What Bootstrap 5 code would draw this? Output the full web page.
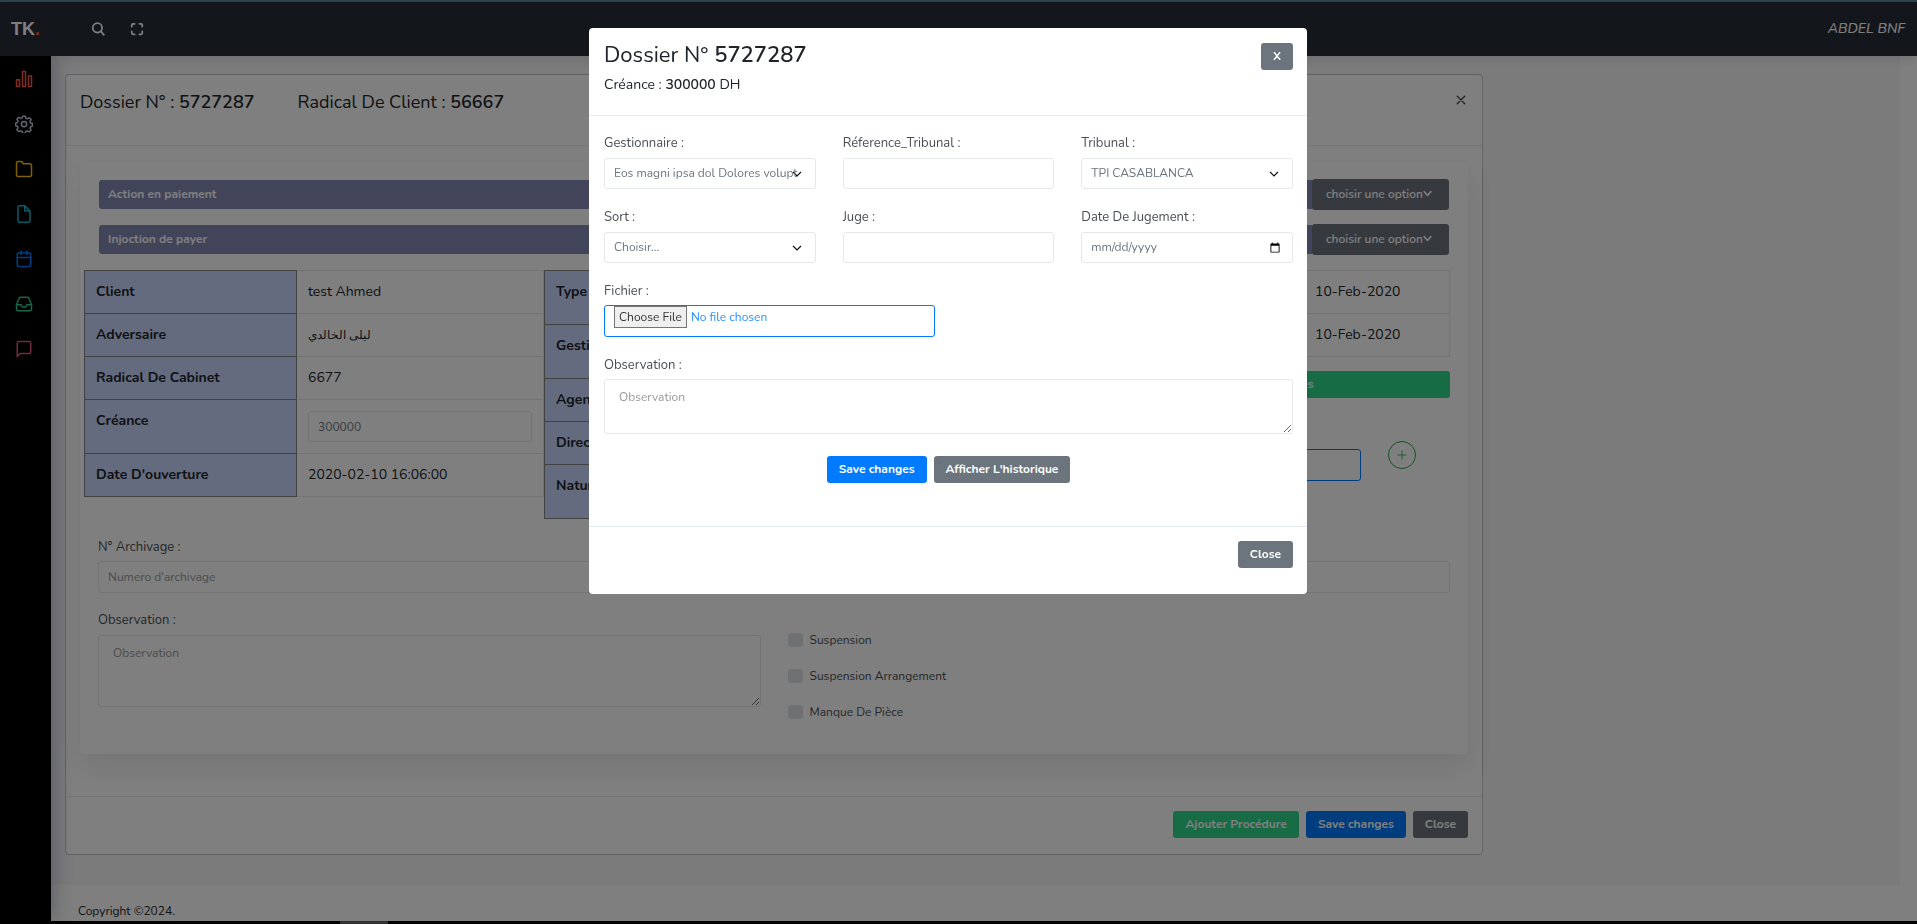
<!DOCTYPE html>
<html lang="fr">
<head>
<meta charset="utf-8">
<meta name="viewport" content="width=device-width, initial-scale=1">
<title>Dossier N° 5727287</title>
<link href="https://cdn.jsdelivr.net/npm/bootstrap@5.3.0/dist/css/bootstrap.min.css" rel="stylesheet">
<style>
  body { font-family: Nunito, Roboto, "Noto Sans", sans-serif; font-size: 13px; line-height: 20px; color: #212529; background: #fff; }
  strong { font-weight: 600; }
  svg { fill: none; stroke: currentColor; stroke-width: 2; stroke-linecap: round; stroke-linejoin: round; width: 100%; height: 100%; }

  /* Page frame */
  .top-strip { height: 2px; background: #5e8a96; }
  .bottom-strip { height: 3px; background: #000; padding-left: 340px; position: relative; z-index: 2; }
  .bottom-strip div { width: 48px; height: 3px; background: #666; }
  .topbar { height: 54px; background: #272c35; color: #fff; position: relative; z-index: 2; box-shadow: 0 2px 12px rgba(0,0,0,.12); }
  .brand { width: 51px; padding-left: 11px; font: 700 18px/24px "Liberation Sans", sans-serif; color: #fff; text-decoration: none; }
  .brand span { color: #ff5b45; }
  .tools { margin-left: 40px; gap: 25px; }
  .icon-btn { border: 0; background: none; padding: 0; width: 14px; height: 14px; display: flex; color: #fff; }
  .icon-btn svg { stroke-width: 3; }
  .user-name { font-size: 14px; font-style: italic; font-weight: 500; color: #fff; text-decoration: none; }
  .sidebar { width: 51px; flex: none; background: #000; padding-top: 14px; gap: 27px; box-shadow: 2px 0 20px rgba(20,30,70,.3); z-index: 1; }
  .sidebar a { width: 18px; height: 18px; display: flex; margin-right: 3px; }
  .ic-stats { color: #ff5b45; } .ic-gear { color: #c4cbe0; } .ic-folder { color: #ffc107; } .ic-doc { color: #17b8d4; }
  .ic-cal { color: #007bff; } .ic-inbox { color: #2eca8b; } .ic-msg { color: #e4567b; }
  .content { background: #f6f6f9; margin-right: 17px; padding: 18px 14px 29px; }
  .page-footer { padding: 16px 27px 0; height: 36px; font-size: 12px; }

  /* Controls */
  .btn { --bs-btn-font-size: 12px; --bs-btn-line-height: 17px; --bs-btn-padding-y: 5px; --bs-btn-padding-x: 12px; --bs-btn-border-width: 0px; --bs-btn-border-radius: 3px; --bs-btn-font-weight: 700; }
  .btn-primary { --bs-btn-bg: #007bff; }
  .btn-success { --bs-btn-bg: #2ed68b; }
  .form-control, .form-select { font-size: 12px; line-height: 19px; height: 31px; padding: 5px 9px; color: #6c757d; border: 1px solid #e6e8eb; border-radius: 3px; }
  .form-select { padding-right: 17px; text-overflow: clip; background: #fff url("data:image/svg+xml,%3csvg xmlns='http://www.w3.org/2000/svg' viewBox='0 0 10 10'%3e%3cpath d='M1 3l4 4 4-4' fill='none' stroke='%23111' stroke-width='1.200'/%3e%3c/svg%3e") no-repeat right 13px center / 10px 10px; }
  .form-control::placeholder { color: #999; opacity: 1; }
  textarea.form-control { padding: 8px 14px; }
  .file-box, .file-box:focus { border-color: #007bff; color: #2a90ff; padding: 0 9px; height: 32px; }
  .form-control.file-box::file-selector-button { margin: 0 4px 0 0; padding: 0 4px; height: 22px; border: 1px solid #767676; background: #efefef; color: #333; border-radius: 0; font-size: 12px; line-height: 18px; }
  label { color: #4a4f54; }
  .field-label { display: block; margin-bottom: 5px; line-height: 20px; }
  .field-label.tight { margin-bottom: 4px; }
  .form-check-input { width: 15px; height: 14px; margin: 0 7px 0 0; border: 0; background-color: #dee2e6; border-radius: 3px; }
  .form-check-label { font-size: 12px; }

  /* Case card */
  .dossier { max-width: 1418px; border: 1px solid #c6c6c9; border-radius: 4px; background: #fff; }
  .dossier-head { height: 71px; padding: 14px; gap: 43px; border-bottom: 1px solid #e9ecef; font-size: 18px; line-height: 26px; }
  .close-x { border: 0; background: none; padding: 2px; width: 14px; height: 14px; display: flex; color: #444; margin-top: 4px; }
  .close-x svg { stroke-width: 3; }
  .panel { margin: 15px 14px 42px; padding: 18px 18px 32px; border-radius: 4px; box-shadow: 0 14px 28px rgba(0,0,0,.08), 0 0 10px rgba(0,0,0,.02); }
  .bars { gap: 14px; margin: 0 1px 15px; }
  .bar { background: #858bb4; color: #fff; font-weight: 700; font-size: 12px; line-height: 29px; padding-left: 9px; border-radius: 3px 0 0 3px; }
  .opt { --bs-btn-padding-y: 7px; --bs-btn-padding-x: 14px; --bs-btn-font-weight: 600; width: 137px; text-align: left; }
  .opt svg { width: 9px; height: 9px; stroke-width: 4; vertical-align: baseline; }
  .data { width: 100%; font-size: 14px; line-height: 20px; border-collapse: collapse; }
  .data th, .data td { padding: 11px; border: 1px solid #e3e6e9; vertical-align: top; }
  .data th { background: #cad6ff; border-color: #858585; font-weight: 700; width: 212px; }
  .third .data th { width: 299px; }
  .arabic { font-size: 12px; }
  .tables { margin: 0 -14px 18px; }
  .third { padding-right: 14px; }
  .proc { margin-top: 14px; }
  .upload { margin-top: 26px; gap: 27px; padding-right: 34px; }
  .add-btn { width: 28px; height: 28px; border: 1px solid #28a745; border-radius: 50%; background: none; color: #28a745; padding: 8px; display: flex; margin-top: 17px; }
  .tall { height: 32px; }
  .obs { --bs-gutter-x: 27px; margin-top: 17px; }
  .obs textarea { height: 72px; }
  .checks { padding-top: 20px; gap: 16px; }
  .dossier-foot { gap: 7px; padding: 14px 14px 16px; border-top: 1px solid #e9ecef; }

  /* Dialog */
  .modal { padding-right: 21px; }
  .modal-dialog { max-width: 718px; }
  .modal-content { border: 0; border-radius: 4px; }
  .modal-header { padding: 15px 14px 19px 15px; border-color: #e9ecef; }
  .modal-title { font-size: 22px; line-height: 24px; font-weight: 400; }
  .sub { font-size: 14px; line-height: 22px; margin-top: 7px; }
  .modal-body { padding: 17px 14px 43px 15px; }
  .modal-body .row { --bs-gutter-x: 27px; --bs-gutter-y: 18px; }
  .modal-body textarea { height: 55px; }
  .modal-actions { gap: 7px; margin-top: 22px; }
  .modal-footer { padding: 14px 14px 26px; border-color: #e3e8ee; }
  .modal-footer > * { margin: 0; }
</style>
</head>
<body class="modal-open">
<div class="min-vh-100 d-flex flex-column">
  <div class="top-strip"></div>
  <header class="topbar d-flex align-items-center">
    <a class="brand" href="#">TK<span>.</span></a>
    <div class="tools d-flex align-items-center flex-fill">
      <button class="icon-btn" type="button" aria-label="Rechercher"><svg viewBox="0 0 24 24"><circle cx="11" cy="10" r="8"/><path d="M17 16l5 6"/></svg></button>
      <button class="icon-btn" type="button" aria-label="Plein écran"><svg viewBox="0 0 24 24"><path d="M8 3H5a2 2 0 0 0-2 2v3M21 8V5a2 2 0 0 0-2-2h-3M16 21h3a2 2 0 0 0 2-2v-3M3 16v3a2 2 0 0 0 2 2h3"/></svg></button>
    </div>
    <a class="user-name pe-2 me-1" href="#">ABDEL BNF</a>
  </header>
  <div class="d-flex flex-fill">
    <nav class="sidebar d-flex flex-column align-items-center" aria-label="Menu">
      <a href="#" class="ic-stats" aria-label="Statistiques"><svg viewBox="0 0 24 24"><path d="M2 13h4v9H2zM10 2h4v20h-4zM18 8h4v14h-4z"/></svg></a>
      <a href="#" class="ic-gear" aria-label="Paramètres"><svg viewBox="0 0 24 24"><circle cx="12" cy="12" r="3.500"/><path d="M10.200 1.500h3.600l.7 2.800 2 .8 2.500-1.500 2.500 2.500-1.500 2.500.8 2 2.300.7v3.600l-2.300.7-.8 2 1.500 2.500-2.500 2.500-2.500-1.500-2 .8-.7 2.300h-3.600l-.7-2.300-2-.8L5 22.100l-2.500-2.500L4 17.100l-.8-2-2.300-.7v-3.600l2.300-.7.8-2-1.500-2.500L5 3.100l2.500 1.500 2-.8z"/></svg></a>
      <a href="#" class="ic-folder" aria-label="Dossiers"><svg viewBox="0 0 24 24"><path d="M22 20a2 2 0 0 1-2 2H4a2 2 0 0 1-2-2V4a2 2 0 0 1 2-2h5l2 3h9a2 2 0 0 1 2 2z"/></svg></a>
      <a href="#" class="ic-doc" aria-label="Documents"><svg viewBox="0 0 24 24"><path d="M13 1H6a2 2 0 0 0-2 2v18a2 2 0 0 0 2 2h12a2 2 0 0 0 2-2V8zM13 1v7h7"/></svg></a>
      <a href="#" class="ic-cal" aria-label="Calendrier"><svg viewBox="0 0 24 24"><rect x="3" y="4" width="18" height="18" rx="2"/><path d="M16 1v5M8 1v5M3 10h18"/></svg></a>
      <a href="#" class="ic-inbox" aria-label="Boîte"><svg viewBox="0 0 24 24"><path d="M22 13h-6l-2 3h-4l-2-3H2"/><path d="M5.500 4.100L2 13v6a2 2 0 0 0 2 2h16a2 2 0 0 0 2-2v-6l-3.500-8.900A2 2 0 0 0 16.800 3H7.200a2 2 0 0 0-1.700 1.100z"/></svg></a>
      <a href="#" class="ic-msg" aria-label="Messages"><svg viewBox="0 0 24 24"><path d="M21 16a2 2 0 0 1-2 2H7l-4 4V4a2 2 0 0 1 2-2h14a2 2 0 0 1 2 2z"/></svg></a>
    </nav>
    <div class="flex-fill d-flex flex-column">
      <main class="content flex-fill">
        <section class="dossier">
          <div class="dossier-head d-flex">
            <div>Dossier N° : <strong>5727287</strong></div>
            <div>Radical De Client : <strong>56667</strong></div>
            <button type="button" class="close-x ms-auto" aria-label="Fermer"><svg viewBox="0 0 24 24"><path d="M3 3l18 18M21 3L3 21"/></svg></button>
          </div>
          <div class="panel">
            <div class="bars d-flex flex-column">
              <div class="d-flex align-items-center"><div class="bar flex-fill">Action en paiement</div><button type="button" class="btn btn-secondary opt">choisir une option<svg viewBox="0 0 24 24"><path d="M3 7l9 10 9-10"/></svg></button></div>
              <div class="d-flex align-items-center"><div class="bar flex-fill">Injoction de payer</div><button type="button" class="btn btn-secondary opt">choisir une option<svg viewBox="0 0 24 24"><path d="M3 7l9 10 9-10"/></svg></button></div>
            </div>
            <div class="row gx-0 tables">
              <div class="col-4">
                <table class="data">
                  <tr><th>Client</th><td>test Ahmed</td></tr>
                  <tr><th>Adversaire</th><td><span class="arabic" lang="ar">ليلى الخالدي</span></td></tr>
                  <tr><th>Radical De Cabinet</th><td>6677</td></tr>
                  <tr><th>Créance</th><td><input class="form-control" aria-label="Créance" value="300000"></td></tr>
                  <tr><th>Date D'ouverture</th><td>2020-02-10 16:06:00</td></tr>
                </table>
              </div>
              <div class="col-4">
                <table class="data">
                  <tr><th>Type</th><td><input class="form-control" aria-label="Type"></td></tr>
                  <tr><th>Gestionnaire</th><td><input class="form-control" aria-label="Gestionnaire"></td></tr>
                  <tr><th>Agence</th><td>Casablanca</td></tr>
                  <tr><th>Direction</th><td>Casablanca</td></tr>
                  <tr><th>Nature</th><td><input class="form-control" aria-label="Nature"></td></tr>
                </table>
              </div>
              <div class="col-4 third">
                <table class="data">
                  <tr><th>Date de création</th><td>10-Feb-2020</td></tr>
                  <tr><th>Date de saisie</th><td>10-Feb-2020</td></tr>
                </table>
                <button type="button" class="btn btn-success w-100 proc">Afficher Les Procédures Jointes</button>
                <div class="d-flex upload">
                  <div class="flex-fill"><label class="field-label" for="piece">Fichier :</label><input class="form-control file-box" id="piece" type="file"></div>
                  <button type="button" class="add-btn" aria-label="Ajouter"><svg viewBox="0 0 24 24"><path d="M12 2v20M2 12h20"/></svg></button>
                </div>
              </div>
            </div>
            <label class="field-label tight" for="arch">N° Archivage :</label>
            <input class="form-control tall" id="arch" placeholder="Numero d'archivage">
            <div class="row obs">
              <div class="col-6"><label class="field-label" for="obs1">Observation :</label><textarea class="form-control d-block" id="obs1" placeholder="Observation"></textarea></div>
              <div class="col-6 checks d-flex flex-column">
                <div class="d-flex align-items-center"><input class="form-check-input" type="checkbox" id="c1"><label class="form-check-label" for="c1">Suspension</label></div>
                <div class="d-flex align-items-center"><input class="form-check-input" type="checkbox" id="c2"><label class="form-check-label" for="c2">Suspension Arrangement</label></div>
                <div class="d-flex align-items-center"><input class="form-check-input" type="checkbox" id="c3"><label class="form-check-label" for="c3">Manque De Pièce</label></div>
              </div>
            </div>
          </div>
          <div class="dossier-foot d-flex justify-content-end">
            <button type="button" class="btn btn-success">Ajouter Procédure</button>
            <button type="button" class="btn btn-primary">Save changes</button>
            <button type="button" class="btn btn-secondary">Close</button>
          </div>
        </section>
      </main>
      <footer class="page-footer">Copyright ©2024.</footer>
    </div>
  </div>
  <div class="bottom-strip"><div></div></div>
</div>

<div class="modal-backdrop show"></div>
<div class="modal show d-block" tabindex="-1" role="dialog" aria-labelledby="mt">
  <div class="modal-dialog">
    <form class="modal-content">
      <div class="modal-header align-items-start">
        <div><h5 class="modal-title" id="mt">Dossier N° <strong>5727287</strong></h5><div class="sub">Créance : <strong>300000</strong> DH</div></div>
        <button type="button" class="btn btn-secondary">X</button>
      </div>
      <div class="modal-body">
        <div class="row">
          <div class="col-4"><label class="field-label" for="f1">Gestionnaire :</label><select class="form-select" id="f1"><option>Eos magni ipsa dol Dolores voluptas</option></select></div>
          <div class="col-4"><label class="field-label" for="f2">Réference_Tribunal :</label><input class="form-control" id="f2"></div>
          <div class="col-4"><label class="field-label" for="f3">Tribunal :</label><select class="form-select" id="f3"><option>TPI CASABLANCA</option></select></div>
          <div class="col-4"><label class="field-label" for="f4">Sort :</label><select class="form-select" id="f4"><option>Choisir...</option></select></div>
          <div class="col-4"><label class="field-label" for="f5">Juge :</label><input class="form-control" id="f5"></div>
          <div class="col-4"><label class="field-label" for="f6">Date De Jugement :</label><input class="form-control" type="date" id="f6"></div>
          <div class="col-6"><label class="field-label tight" for="f7">Fichier :</label><input class="form-control file-box" type="file" id="f7"></div>
          <div class="col-12"><label class="field-label tight" for="f8">Observation :</label><textarea class="form-control d-block" id="f8" placeholder="Observation"></textarea></div>
        </div>
        <div class="d-flex justify-content-center modal-actions"><button type="button" class="btn btn-primary">Save changes</button><button type="button" class="btn btn-secondary">Afficher L'historique</button></div>
      </div>
      <div class="modal-footer"><button type="button" class="btn btn-secondary">Close</button></div>
    </form>
  </div>
</div>
<script src="https://cdn.jsdelivr.net/npm/bootstrap@5.3.0/dist/js/bootstrap.bundle.min.js"></script>
</body>
</html>
